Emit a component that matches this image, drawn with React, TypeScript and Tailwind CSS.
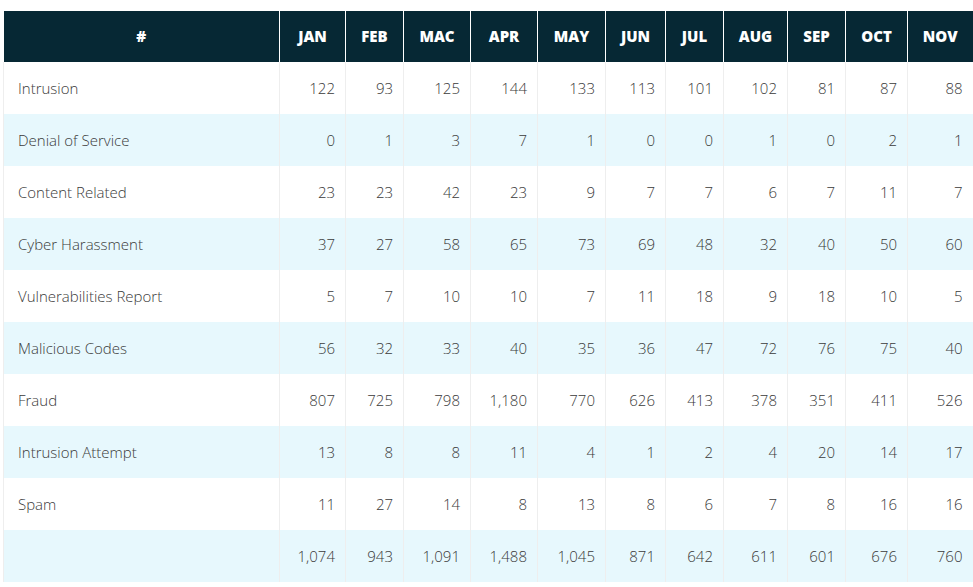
const months = ["JAN", "FEB", "MAC", "APR", "MAY", "JUN", "JUL", "AUG", "SEP", "OCT", "NOV"];
const widths = ["w-[66px]", "w-[58px]", "w-[67px]", "w-[67px]", "w-[68px]", "w-[60px]", "w-[58px]", "w-[64px]", "w-[58px]", "w-[62px]", "w-[65px]"];

const rows: { name: string; values: string[] }[] = [
  { name: "Intrusion", values: ["122", "93", "125", "144", "133", "113", "101", "102", "81", "87", "88"] },
  { name: "Denial of Service", values: ["0", "1", "3", "7", "1", "0", "0", "1", "0", "2", "1"] },
  { name: "Content Related", values: ["23", "23", "42", "23", "9", "7", "7", "6", "7", "11", "7"] },
  { name: "Cyber Harassment", values: ["37", "27", "58", "65", "73", "69", "48", "32", "40", "50", "60"] },
  { name: "Vulnerabilities Report", values: ["5", "7", "10", "10", "7", "11", "18", "9", "18", "10", "5"] },
  { name: "Malicious Codes", values: ["56", "32", "33", "40", "35", "36", "47", "72", "76", "75", "40"] },
  { name: "Fraud", values: ["807", "725", "798", "1,180", "770", "626", "413", "378", "351", "411", "526"] },
  { name: "Intrusion Attempt", values: ["13", "8", "8", "11", "4", "1", "2", "4", "20", "14", "17"] },
  { name: "Spam", values: ["11", "27", "14", "8", "13", "8", "6", "7", "8", "16", "16"] },
  { name: "", values: ["1,074", "943", "1,091", "1,488", "1,045", "871", "642", "611", "601", "676", "760"] },
];

export default function App() {
  return (
    <div className="bg-white min-h-screen pt-[11px] pl-[3px] font-['Open_Sans',sans-serif]">
      <table className="table-fixed border-collapse w-[969px] text-[15px]">
        <thead>
          <tr className="bg-[#062834] h-[51px]">
            <th className="w-[276px] text-white font-extrabold text-center border-r border-white">#</th>
            {months.map((m, i) => (
              <th key={m} className={`${widths[i]} text-white font-extrabold text-center border-r border-white last:border-r-0`}>
                {m}
              </th>
            ))}
          </tr>
        </thead>
        <tbody>
          {rows.map((row, idx) => (
            <tr key={idx} className={`h-[52px] ${idx % 2 === 1 ? "bg-[#e7f8fd]" : "bg-white"}`}>
              <td className="pl-[14px] text-left font-light text-[#3a3a3a] border-l border-r border-[#eeeeee]">{row.name}</td>
              {row.values.map((v, i) => (
                <td key={i} className="pr-[10px] text-right font-light text-[#3a3a3a] border-r border-[#eeeeee] last:border-r-0">
                  {v}
                </td>
              ))}
            </tr>
          ))}
        </tbody>
      </table>
    </div>
  );
}
